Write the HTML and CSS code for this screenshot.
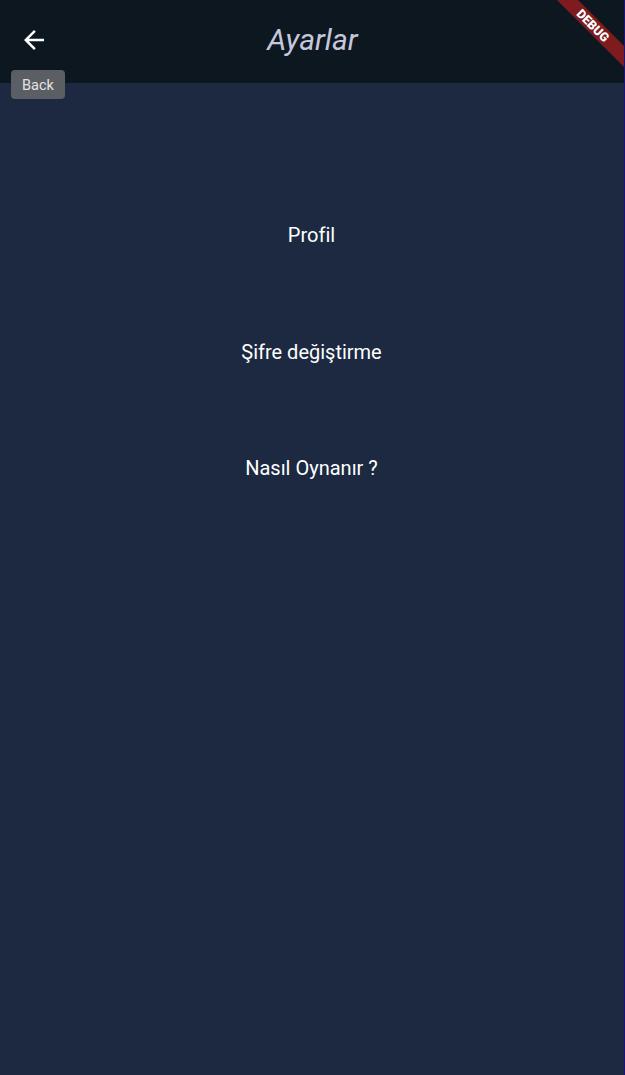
FILE: index.html
```html
<!DOCTYPE html>
<html lang="tr">
<head>
<meta charset="utf-8">
<title>Ayarlar</title>
<link rel="stylesheet" href="styles.css">
</head>
<body>
<div class="screen">
  <header class="appbar">
    <button class="back" aria-label="Back">
      <svg width="20" height="20" viewBox="4 4 16 16"><path d="M20 11H7.83l5.59-5.59L12 4l-8 8 8 8 1.41-1.41L7.83 13H20v-2z" fill="#ffffff"/></svg>
    </button>
    <h1 class="title">Ayarlar</h1>
  </header>
  <main class="menu">
    <div class="item">Profil</div>
    <div class="item">Şifre değiştirme</div>
    <div class="item">Nasıl Oynanır ?</div>
  </main>
  <div class="tooltip">Back</div>
  <div class="banner">DEBUG</div>
  <div class="edge"></div>
</div>
</body>
</html>
```

FILE: styles.css
```css
html, body {
  margin: 0;
  padding: 0;
  background: #1c2941;
}
.screen {
  position: relative;
  width: 625px;
  height: 1075px;
  overflow: hidden;
  background: #1c2941;
  font-family: Roboto, "Noto Sans", sans-serif;
}
.appbar {
  height: 83px;
  background: #0c1720;
  display: flex;
  align-items: center;
  justify-content: center;
  position: relative;
}
.back {
  position: absolute;
  left: 24px;
  top: 30px;
  width: 20px;
  height: 20px;
  padding: 0;
  border: 0;
  background: none;
  display: flex;
}
.title {
  margin: 0;
  font-size: 30px;
  font-style: italic;
  font-weight: 400;
  color: #c6c7dc;
  line-height: 1;
  padding-bottom: 4px;
}
.menu {
  display: flex;
  flex-direction: column;
  padding-top: 94px;
  margin-right: 2px;
}
.item {
  height: 116.5px;
  display: flex;
  align-items: center;
  justify-content: center;
  color: #ffffff;
  font-size: 20px;
}
.tooltip {
  position: absolute;
  left: 11px;
  top: 70px;
  width: 54px;
  height: 29px;
  box-sizing: border-box;
  padding-top: 2px;
  border-radius: 4px;
  background: #5b5e63;
  color: #e3e3e3;
  font-size: 14.5px;
  display: flex;
  align-items: center;
  justify-content: center;
}
.banner {
  position: absolute;
  width: 130px;
  height: 15px;
  left: 528px;
  top: 17.5px;
  transform: rotate(45deg);
  background: #7e1b1f;
  color: #ffffff;
  font-size: 12.5px;
  font-weight: 900;
  line-height: 15px;
  text-align: center;
}
.edge {
  position: absolute;
  right: 0;
  top: 0;
  width: 1px;
  height: 100%;
  background: #1b137a;
}
```
